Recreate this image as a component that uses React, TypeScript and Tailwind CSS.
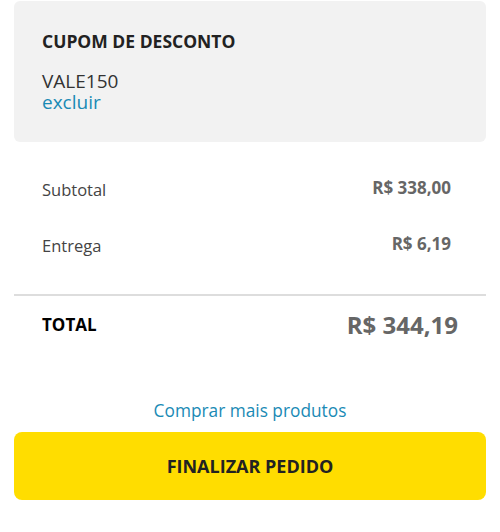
export default function App() {
  return (
    <div
      className="w-[500px] h-[532px] bg-white px-[14px] pt-px"
      style={{ fontFamily: '"Open Sans", "Liberation Sans", sans-serif' }}
    >
      {/* coupon box */}
      <div className="bg-[#f2f2f2] rounded-md h-[141px] px-7 pt-[28px]">
        <h2 className="text-[17.5px] font-bold text-[#222] leading-6">CUPOM DE DESCONTO</h2>
        <p className="mt-[17px] text-[19px] leading-[22px] text-[#333]">VALE150</p>
        <button className="block text-[19px] leading-[21px] text-[#1a8ab5]">excluir</button>
      </div>

      {/* summary */}
      <div className="px-7 pt-[35px]">
        <div className="flex justify-between items-start h-[56px]">
          <span className="text-[16.5px] text-[#444] mt-[1px]">Subtotal</span>
          <span className="text-[17px] font-bold text-[#666] mr-[7px] -mt-[2px]">R$ 338,00</span>
        </div>
        <div className="flex justify-between items-start h-[56px]">
          <span className="text-[16.5px] text-[#444] mt-[1px]">Entrega</span>
          <span className="text-[17px] font-bold text-[#666] mr-[7px] -mt-[2px]">R$ 6,19</span>
        </div>
      </div>

      <div className="mt-[5px] h-[2px] bg-[#dddddd]" />

      <div className="px-7 pt-[8px] flex justify-between items-center h-[50px]">
        <span className="text-[17px] font-bold text-black">TOTAL</span>
        <span className="text-[24px] font-bold text-[#666]">R$ 344,19</span>
      </div>

      <div className="mt-[53px] text-center">
        <a className="text-[17.3px] leading-6 text-[#1a8ab5]">Comprar mais produtos</a>
      </div>

      <button className="mt-[9px] w-full h-[68px] rounded-lg bg-[#ffdd00] text-[18px] font-bold text-[#222]">
        FINALIZAR PEDIDO
      </button>
    </div>
  );
}
